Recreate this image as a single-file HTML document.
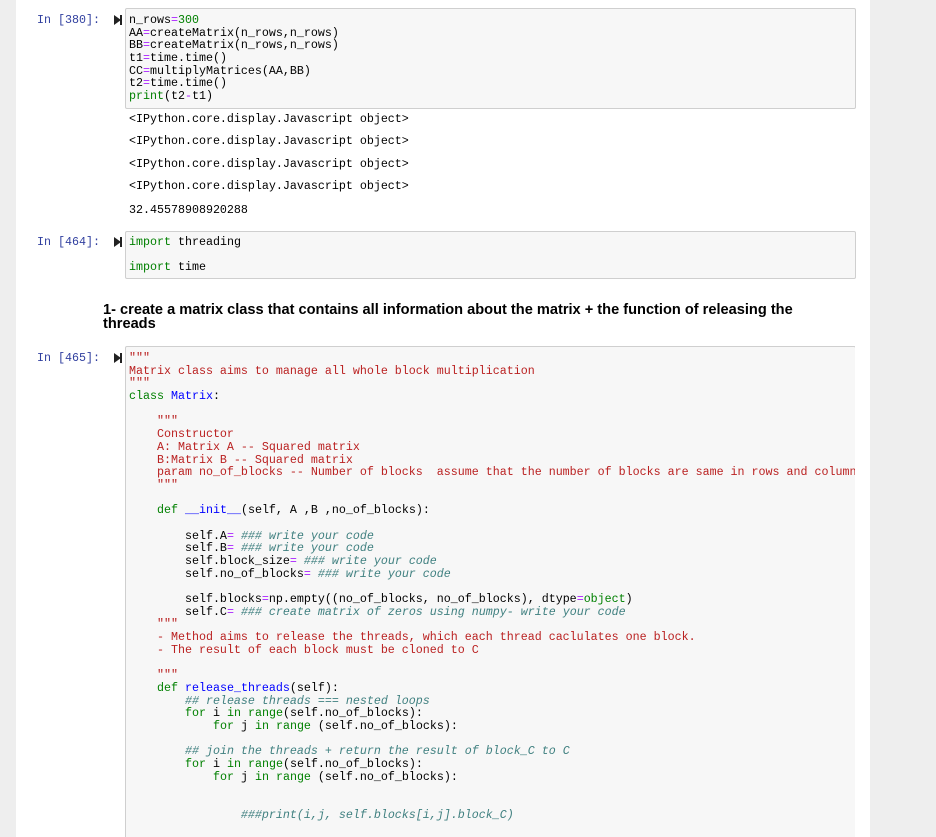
<!DOCTYPE html>
<html style="overflow:hidden;height:837px"><head><style>
body{margin:0;width:936px;height:837px;overflow:hidden;background:#eeeeee;position:relative;font-family:"Liberation Mono",monospace;}
#nb{position:absolute;left:16px;top:0;width:854px;height:837px;background:#fff;}
.box{position:absolute;left:125px;width:729px;background:#f7f7f7;border:1px solid #cfcfcf;border-radius:2px;}
pre{margin:0;position:absolute;left:129px;font-family:"Liberation Mono",monospace;font-size:11.67px;line-height:12.69px;color:#000;white-space:pre;}
.p{position:absolute;left:37px;font-family:"Liberation Mono",monospace;font-size:11.67px;color:#303f9f;}
.run{position:absolute;left:114px;width:0;height:0;border-left:7px solid #222;border-top:5px solid transparent;border-bottom:5px solid transparent;}
.run:after{content:"";position:absolute;left:-1px;top:-5px;width:2px;height:10px;background:#222;}
.k{color:#008000}.o{color:#aa22ff}.n{color:#008000}.s{color:#ba2121}.c{color:#408080;font-style:italic}.b{color:#0000ff}
h3{position:absolute;left:103px;top:303px;margin:0;width:730px;font-family:"Liberation Sans",sans-serif;font-size:14.6px;font-weight:bold;line-height:14px;}
</style></head><body>
<div id="nb"></div>
<div class="p" style="top:13px">In [380]:</div>
<div class="run" style="top:15px"></div>
<div class="box" style="top:8px;height:99px"></div>
<pre style="top:14px">n_rows<span class="o">=</span><span class="n">300</span>
AA<span class="o">=</span>createMatrix(n_rows,n_rows)
BB<span class="o">=</span>createMatrix(n_rows,n_rows)
t1<span class="o">=</span>time.time()
CC<span class="o">=</span>multiplyMatrices(AA,BB)
t2<span class="o">=</span>time.time()
<span class="k">print</span>(t2<span class="o">-</span>t1)</pre>
<pre style="top:113px">&lt;IPython.core.display.Javascript object&gt;</pre>
<pre style="top:135px">&lt;IPython.core.display.Javascript object&gt;</pre>
<pre style="top:158px">&lt;IPython.core.display.Javascript object&gt;</pre>
<pre style="top:180px">&lt;IPython.core.display.Javascript object&gt;</pre>
<pre style="top:204px">32.45578908920288</pre>

<div class="p" style="top:235px">In [464]:</div>
<div class="run" style="top:237px"></div>
<div class="box" style="top:231px;height:46px"></div>
<pre style="top:236px"><span class="k">import</span> threading

<span class="k">import</span> time</pre>

<h3>1- create a matrix class that contains all information about the matrix + the function of releasing the threads</h3>

<div class="p" style="top:351px">In [465]:</div>
<div class="run" style="top:353px"></div>
<div class="box" style="top:346px;height:500px"></div>
<pre style="top:352px"><span class="s">"""
Matrix class aims to manage all whole block multiplication
"""</span>
<span class="k">class</span> <span class="b">Matrix</span>:

    <span class="s">"""
    Constructor
    A: Matrix A -- Squared matrix
    B:Matrix B -- Squared matrix
    param no_of_blocks -- Number of blocks  assume that the number of blocks are same in rows and column
    """</span>

    <span class="k">def</span> <span class="b">__init__</span>(self, A ,B ,no_of_blocks):

        self.A<span class="o">=</span> <span class="c">### write your code</span>
        self.B<span class="o">=</span> <span class="c">### write your code</span>
        self.block_size<span class="o">=</span> <span class="c">### write your code</span>
        self.no_of_blocks<span class="o">=</span> <span class="c">### write your code</span>

        self.blocks<span class="o">=</span>np.empty((no_of_blocks, no_of_blocks), dtype<span class="o">=</span><span class="k">object</span>)
        self.C<span class="o">=</span> <span class="c">### create matrix of zeros using numpy- write your code</span>
    <span class="s">"""
    - Method aims to release the threads, which each thread caclulates one block.
    - The result of each block must be cloned to C

    """</span>
    <span class="k">def</span> <span class="b">release_threads</span>(self):
        <span class="c">## release threads === nested loops</span>
        <span class="k">for</span> i <span class="k">in</span> <span class="k">range</span>(self.no_of_blocks):
            <span class="k">for</span> j <span class="k">in</span> <span class="k">range</span> (self.no_of_blocks):

        <span class="c">## join the threads + return the result of block_C to C</span>
        <span class="k">for</span> i <span class="k">in</span> <span class="k">range</span>(self.no_of_blocks):
            <span class="k">for</span> j <span class="k">in</span> <span class="k">range</span> (self.no_of_blocks):


                <span class="c">###print(i,j, self.blocks[i,j].block_C)</span></pre>
<div style="position:absolute;left:855px;top:346px;width:15px;height:491px;background:#fff"></div>
</body></html>
